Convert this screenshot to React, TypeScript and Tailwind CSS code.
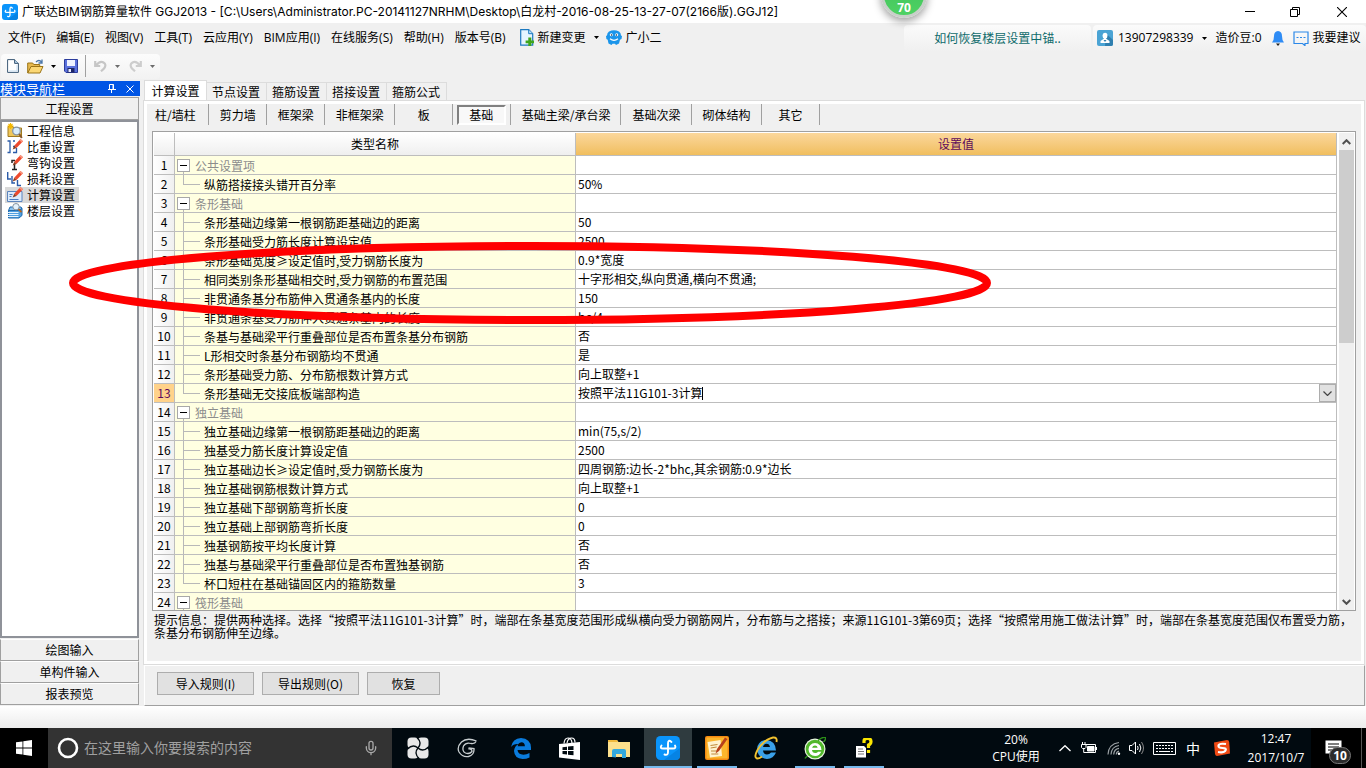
import { useState } from "react";
import type { ReactNode } from "react";
import { LuMic } from "react-icons/lu";

const UI = "font-['Open_Sans','Noto_Sans_CJK_SC',sans-serif]";
const WIDE = "font-['Inter','Noto_Sans_CJK_SC',sans-serif]";
const SONG = "font-['Noto_Sans_CJK_SC',sans-serif]";

type Row = { name: string; value?: string; group?: boolean; last?: boolean };

const rows: Row[] = [
  { name: "公共设置项", group: true },
  { name: "纵筋搭接接头错开百分率", value: "50%", last: true },
  { name: "条形基础", group: true },
  { name: "条形基础边缘第一根钢筋距基础边的距离", value: "50" },
  { name: "条形基础受力筋长度计算设定值", value: "2500" },
  { name: "条形基础宽度≥设定值时,受力钢筋长度为", value: "0.9*宽度" },
  { name: "相同类别条形基础相交时,受力钢筋的布置范围", value: "十字形相交,纵向贯通,横向不贯通;" },
  { name: "非贯通条基分布筋伸入贯通条基内的长度", value: "150" },
  { name: "非贯通条基受力筋伸入贯通条基内的长度", value: "bc/4" },
  { name: "条基与基础梁平行重叠部位是否布置条基分布钢筋", value: "否" },
  { name: "L形相交时条基分布钢筋均不贯通", value: "是" },
  { name: "条形基础受力筋、分布筋根数计算方式", value: "向上取整+1" },
  { name: "条形基础无交接底板端部构造", value: "按照平法11G101-3计算", last: true },
  { name: "独立基础", group: true },
  { name: "独立基础边缘第一根钢筋距基础边的距离", value: "min(75,s/2)" },
  { name: "独基受力筋长度计算设定值", value: "2500" },
  { name: "独立基础边长≥设定值时,受力钢筋长度为", value: "四周钢筋:边长-2*bhc,其余钢筋:0.9*边长" },
  { name: "独立基础钢筋根数计算方式", value: "向上取整+1" },
  { name: "独立基础下部钢筋弯折长度", value: "0" },
  { name: "独立基础上部钢筋弯折长度", value: "0" },
  { name: "独基钢筋按平均长度计算", value: "否" },
  { name: "独基与基础梁平行重叠部位是否布置独基钢筋", value: "否" },
  { name: "杯口短柱在基础锚固区内的箍筋数量", value: "3", last: true },
  { name: "筏形基础", group: true },
];
const EDITED_ROW = 13;

function AppLogo({ size }: { size: number }) {
  return (
    <svg width={size} height={size} viewBox="0 0 24 24" aria-hidden="true">
      <rect width="24" height="24" rx="4.5" fill="#0a94fb" />
      <path d="M8 24 24 12v8a4 4 0 0 1-4 4z" fill="#0683e4" />
      <g fill="none" stroke="#fff" strokeWidth="1.9" strokeLinecap="round">
        <path d="M15.500 6Q12 3 12 7.500V16q0 3.800-3.500 2.500" />
        <path d="M5.500 9.500Q3.500 12.500 7 12.500h10q3.500 0 2-3" />
      </g>
    </svg>
  );
}

function Caret({ color = "#000" }: { color?: string }) {
  return (
    <svg width="5" height="3" viewBox="0 0 5 3" aria-hidden="true">
      <path d="M0 0h5L2.500 3z" fill={color} />
    </svg>
  );
}

function TitleBar() {
  return (
    <header className="flex h-[23px] shrink-0 items-center bg-white pl-[2px] text-black">
      <AppLogo size={16} />
      <h1 className={`ml-1 whitespace-nowrap text-[12px] leading-[16px] ${WIDE}`}>
        广联达BIM钢筋算量软件 GGJ2013 - [C:\Users\Administrator.PC-20141127NRHM\Desktop\白龙村-2016-08-25-13-27-07(2166版).GGJ12]
      </h1>
      <div className="ml-auto flex h-full items-center">
        <button aria-label="最小化" className="flex h-full w-[46px] items-center justify-center">
          <svg width="10" height="10" viewBox="0 0 10 10"><path d="M0 4.500h10" stroke="#000" /></svg>
        </button>
        <button aria-label="还原" className="flex h-full w-[44px] items-center justify-center">
          <svg width="10" height="10" viewBox="0 0 10 10" fill="none" stroke="#000">
            <path d="M.5 2.500h7v7h-7zM2.500 2.500v-2h7v7h-2" />
          </svg>
        </button>
        <button aria-label="关闭" className="flex h-full w-[49px] items-center justify-center">
          <svg width="10" height="10" viewBox="0 0 10 10"><path d="M0 0l10 10M10 0L0 10" stroke="#000" strokeWidth="1.100" /></svg>
        </button>
      </div>
    </header>
  );
}

const menus = ["文件(F)", "编辑(E)", "视图(V)", "工具(T)", "云应用(Y)", "BIM应用(I)", "在线服务(S)", "帮助(H)", "版本号(B)"];

function MenuBar() {
  return (
    <nav aria-label="菜单" className="flex h-[29px] shrink-0 items-center whitespace-nowrap pl-2 text-[12px] leading-[16px] text-black">
      <div className="flex gap-[11px]">
        {menus.map((m) => <button key={m}>{m}</button>)}
      </div>
      <button className="ml-[14px] flex items-center gap-1">
        <svg width="14" height="17" viewBox="0 0 14 17" aria-hidden="true">
          <path d="M.7.7h8l4 4v11.500h-12z" fill="#e6f4ff" stroke="#1c79c0" strokeWidth="1.200" />
          <path d="M8.700.7v4h4" fill="#bfe0fa" stroke="#1c79c0" />
          <path d="M8.300 8.500h3v3h2.700v2.700h-2.700v2.800h-3v-2.800H5.600v-2.700h2.700z" fill="#3fa51b" />
        </svg>
        新建变更
        <span className="pl-1"><Caret /></span>
      </button>
      <button className="ml-[7px] flex items-center gap-1">
        <svg width="16" height="15" viewBox="0 0 16 15" aria-hidden="true">
          <path d="M3 1.500Q8-1.200 13 1.500q2 1.500 2 4l1 .5-.5 3-1.500.8-1 3.700-3 1.500-1-1.200H6.500L5.500 15l-3-1.500-.8-3.700L.4 9 0 6l1-.5q0-2.500 2-4z" fill="#1b95ea" />
          <circle cx="5.300" cy="4.800" r="1.500" fill="#fff" /><circle cx="10.700" cy="4.800" r="1.500" fill="#fff" />
          <circle cx="5.500" cy="5" r=".7" fill="#123" /><circle cx="10.500" cy="5" r=".7" fill="#123" />
          <path d="M4 8.800q4 3 8 0" fill="none" stroke="#fff" strokeWidth="1.200" />
        </svg>
        广小二
      </button>
      <div className="ml-auto flex h-full items-center gap-[2px] pt-px">
        <a href="#tip" className={`flex h-[26px] w-[187px] items-center justify-center rounded-sm bg-linear-to-b from-[#fbfbfb] to-[#f0f0f0] text-[#0f6b6b] ${SONG}`}>
          如何恢复楼层设置中锚..
        </a>
        <div className="flex h-[26px] w-[273px] items-center rounded-sm bg-linear-to-b from-[#fbfbfb] to-[#f0f0f0] pl-1">
          <button className="flex items-center gap-[5px]">
            <svg width="16" height="16" viewBox="0 0 16 16" aria-hidden="true">
              <rect width="16" height="16" rx="2" fill="#4aa3d4" />
              <path d="M9 3.500 16 10v4a2 2 0 0 1-2 2H8z" fill="#2f7faf" />
              <path d="M8 2.700q2.500 0 2.500 2.800T8.800 8.500L12.500 11v2h-9v-2l3.700-2.500Q5.500 8 5.500 5.500T8 2.700z" fill="#fff" />
              <path d="M6.500 10h3L8 12z" fill="#2f7faf" />
            </svg>
            13907298339
            <span className="pl-1"><Caret /></span>
          </button>
          <span className="ml-2">造价豆:0</span>
          <button aria-label="通知" className="ml-[10px]">
            <svg width="12" height="15" viewBox="0 0 12 15">
              <path d="M6 0q4 .5 4 5 0 4.500 2 6.500H0Q2 9.500 2 5 2 .5 6 0z" fill="#2f8cf5" />
              <path d="M4 12.500h4L6 15z" fill="#222" />
            </svg>
          </button>
          <button className="ml-[9px] flex items-center gap-1">
            <svg width="16" height="15" viewBox="0 0 16 15" aria-hidden="true" fill="none" stroke="#2b88e8" strokeWidth="1.200">
              <path d="M1 1h14v11.500h-3v2.200L9.500 12.500H1zM3.500 6.500h2m1.500 0h2m1.500 0h2" />
            </svg>
            我要建议
          </button>
        </div>
      </div>
    </nav>
  );
}

function ToolBar() {
  return (
    <div className="flex h-7 shrink-0 items-center pl-px">
      <div role="toolbar" aria-label="工具栏" className="flex h-[25px] w-[159px] items-center rounded-sm bg-linear-to-b from-[#fcfcfc] to-[#f2f2f2] pl-[6px]">
        <button aria-label="新建">
          <svg width="12" height="14" viewBox="0 0 12 14"><path d="M.6.6h7l3.800 3.800v9H.6z" fill="#fff" stroke="#3d5a75" /><path d="M7.600.6v3.800h3.800" fill="#b8d3ea" stroke="#3d5a75" /><path d="M2 12h8V6" stroke="#c5dcf0" fill="none" /></svg>
        </button>
        <button aria-label="打开" className="ml-2 flex items-center gap-[6px]">
          <svg width="18" height="15" viewBox="0 0 18 15">
            <path d="M.7 14V4h5l1 1.500h6V8" fill="#e7b94e" stroke="#9a7418" />
            <path d="M.8 14 4 7.500h12L13 14z" fill="#fbd774" stroke="#9a7418" />
            <path d="M9 3q3-3 5.500 0M15 .5V4h-3.500" fill="none" stroke="#4a76a8" strokeWidth="1.300" />
          </svg>
          <Caret />
        </button>
        <button aria-label="保存" className="ml-2">
          <svg width="14" height="14" viewBox="0 0 14 14"><path d="M.5.5h13v13H2L.5 12z" fill="#5a70dc" /><path d="M.5.5h13v13H2L.5 12z" fill="none" stroke="#2c3c9c" /><path d="M3 1h8v6H3z" fill="#eef1ff" /><path d="M3.500 9h7v4.500h-7z" fill="#1d2566" /><path d="M4.500 10h2.500v3H4.500z" fill="#e8ecff" /></svg>
        </button>
        <span className="ml-[7px] h-[22px] w-px bg-[#a0a0a0]" />
        <button aria-label="撤销" disabled className="ml-2 flex items-center gap-2">
          <svg width="13" height="12" viewBox="0 0 13 12" fill="none" stroke="#c6c6c6" strokeWidth="2.200"><path d="M1.200 1v5h5M2 5.500Q6 .5 9.500 2.500T10 8.500L7 11.300" /></svg>
          <Caret color="#6b6b6b" />
        </button>
        <button aria-label="重做" disabled className="ml-[9px] flex items-center gap-[8px]">
          <svg width="13" height="12" viewBox="0 0 13 12" fill="none" stroke="#cdcdcd" strokeWidth="2.200"><path d="M11.800 1v5h-5M11 5.500Q7 .5 3.500 2.500T3 8.500L6 11.300" /></svg>
          <Caret color="#6b6b6b" />
        </button>
      </div>
    </div>
  );
}

function Pencil() {
  return (
    <g>
      <path d="M13.500 0 16 2.300 9.500 9 7.200 6.700z" fill="#ee4a2e" />
      <path d="M13.500 0 16 2.300l-1.200 1.200-2.500-2.300z" fill="#f8977f" />
      <path d="M7.200 6.700 9.500 9 5.700 10.500z" fill="#8a3a1c" />
    </g>
  );
}

const navItems: { label: string; icon: ReactNode }[] = [
  {
    label: "工程信息",
    icon: <><path d="M1 3.500h5l1 1.500h7.500v8.500H1z" fill="#f0c75a" stroke="#a07a20" /><path d="M3.500 0v6M.5 3h6M1.500 1l4 4M5.500 1l-4 4" stroke="#f5b800" strokeWidth="1.100" /><circle cx="9.500" cy="8" r="3.800" fill="#d8ecfa" stroke="#8894a0" strokeWidth="1.300" /><path d="m12.300 11 2.500 4" stroke="#8a5a2a" strokeWidth="2" /></>,
  },
  {
    label: "比重设置",
    icon: <><path d="M.5 2H3v11.500H.5M6 2h2M6 7.500h2M6 13.500h3.500V9M3 13.500" fill="none" stroke="#2b5ba8" strokeWidth="1.300" /><Pencil /></>,
  },
  {
    label: "弯钩设置",
    icon: <><path d="M7.500 9v5.500M5 14.500h5M5 8V5.500h3" fill="none" stroke="#222" strokeWidth="1.500" /><Pencil /></>,
  },
  {
    label: "损耗设置",
    icon: <><path d="M.7 1v7H4M5 5v7h3M10.500 9v5.500H14" fill="none" stroke="#2b5ba8" strokeWidth="1.400" /><Pencil /></>,
  },
  {
    label: "计算设置",
    icon: <><path d="M.5 4.500h14.500v10H.5z" fill="#dcebfb" stroke="#5b84bd" /><path d="M2.500 7.500h3M2.500 9.500h2M2.500 12.500h9" stroke="#4d7cc0" /><Pencil /></>,
  },
  {
    label: "楼层设置",
    icon: <><path d="M3 4h11l1 1.500-3 2H1.500z" fill="#8cc3f0" stroke="#1f6bb0" /><path d="M1.500 7.500h10l3.500-2v7l-3 2.500H1.500z" fill="#4f9fe0" stroke="#1f6bb0" /><path d="M1 9.500h10.500M1 11.500h10.500M1 13.500h10.500" stroke="#e6f3fd" /><circle cx="9" cy="3.700" r="3.200" fill="#e4f2fc" stroke="#8894a0" /><path d="m11.500 6.200 3 3" stroke="#b5651d" strokeWidth="1.800" /></>,
  },
];

function NavPanel() {
  const bar = "h-[22px] border border-[#a0a0a0] border-t-white bg-[#f0f0f0] text-center";
  return (
    <aside className={`flex w-[140px] shrink-0 flex-col pt-px text-[12px] leading-[16px] text-black ${SONG}`}>
      <div className="flex h-[15px] items-center bg-[#0055e5] text-[13px] leading-[13px] text-white">
        <h2>模块导航栏</h2>
        <button aria-label="固定" className="ml-auto">
          <svg width="8" height="9" viewBox="0 0 8 9" fill="none" stroke="#fff"><path d="M1.500 5V.5h4V5M0 5.500h8M5 .5V5M3.500 5.500V9" /></svg>
        </button>
        <button aria-label="关闭导航栏" className="ml-[10px] mr-[6px]">
          <svg width="8" height="8" viewBox="0 0 8 8" stroke="#fff"><path d="m.5.5 7 7M7.500.5l-7 7" /></svg>
        </button>
      </div>
      <div className="mr-px mt-px flex min-h-0 flex-1 flex-col">
        <button className="h-[23px] border border-[#a0a0a0] bg-[#f0f0f0] text-center">工程设置</button>
        <ul className="flex-1 border-2 border-[#8f9299] bg-white pl-[3px] pt-px">
          {navItems.map((it) => (
            <li key={it.label} className="flex">
              <button className={it.label === "计算设置" ? "flex h-4 items-center gap-1 bg-[#d9d9d9] pl-[2px] pr-1" : "flex h-4 items-center gap-1 pl-[2px] pr-1"}>
                <svg width="16" height="16" viewBox="0 0 16 16" aria-hidden="true">{it.icon}</svg>
                {it.label}
              </button>
            </li>
          ))}
        </ul>
        <button className={`mt-px ${bar}`}>绘图输入</button>
        <button className={bar}>单构件输入</button>
        <button className={bar}>报表预览</button>
      </div>
      <div className="h-px" />
    </aside>
  );
}

function TreeName({ row }: { row: Row }) {
  if (row.group) {
    return (
      <div className="flex h-[18px] pl-[2px]">
        <div className="flex flex-col items-center pt-[3px]">
          <button aria-label="折叠" className="flex h-[13px] w-[13px] shrink-0 items-center justify-center border border-[#a8a8a8] bg-white">
            <span className="h-px w-[7px] bg-black" />
          </button>
          <span className="h-[2px] w-px bg-[#b8b8b8]" />
        </div>
        <span className="pl-[5px] pt-[2px] text-[#8c8c8c]">{row.name}</span>
      </div>
    );
  }
  return (
    <div className="flex h-[18px] pl-2">
      <div className="flex w-[17px] flex-col">
        <span className="h-[10px] border-b border-l border-[#b8b8b8]" />
        {!row.last && <span className="h-2 border-l border-[#b8b8b8]" />}
      </div>
      <span className="pl-1 pt-[2px]">{row.name}</span>
    </div>
  );
}

function ValueCell({ row, index }: { row: Row; index: number }) {
  const [text, setText] = useState(row.value ?? "");
  if (index !== EDITED_ROW) return <div className="h-[18px] pl-[2px] leading-[18px]">{row.value}</div>;
  return (
    <div className="flex h-[18px] items-center pl-[2px]">
      <input aria-label={row.name} value={text} onChange={(e) => setText(e.target.value)} className="field-sizing-content h-4 bg-transparent p-0 leading-[16px] outline-none" />
      <span className="h-[13px] w-px bg-black" />
      <button aria-label="展开选项" className="ml-auto flex h-[18px] w-[17px] items-center justify-center border border-[#adadad] bg-[#e1e1e1]">
        <svg width="9" height="5" viewBox="0 0 9 5" fill="none" stroke="#444" strokeWidth="1.200"><path d="m.5.5 4 4 4-4" /></svg>
      </button>
    </div>
  );
}

function SettingsGrid() {
  const line = "border-b border-r border-[#bdbdbd] p-0";
  return (
    <div className="ml-[5px] mr-[5px] flex min-h-0 flex-1 overflow-hidden border border-[#a0a0a0] bg-white pl-px pt-px">
      <div className="min-w-0 flex-1 overflow-hidden">
        <table className="w-full table-fixed border-separate border-spacing-0 whitespace-nowrap text-left">
          <colgroup>
            <col className="w-[21px]" />
            <col className="w-[401px]" />
            <col />
          </colgroup>
          <thead>
            <tr className="h-[23px]">
              <th className={`bg-linear-to-b from-white to-[#efefef] ${line}`} />
              <th className={`bg-linear-to-b from-white to-[#efefef] text-center font-normal ${line}`}>类型名称</th>
              <th className={`bg-linear-to-b from-[#fbd79b] to-[#f0be5d] text-center font-normal text-[#5c0a5c] ${line}`}>设置值</th>
            </tr>
          </thead>
          <tbody>
            {rows.map((row, i) => {
              const n = i + 1;
              return (
                <tr key={n} className="h-[19px]">
                  <th scope="row" className={n === EDITED_ROW ? `bg-[#ffd28a] text-center font-normal leading-[18px] text-[#5c0a5c] ${line}` : `bg-linear-to-r from-white to-[#f0f0f0] text-center font-normal leading-[18px] ${line}`}>
                    <div className="h-[18px]">{n}</div>
                  </th>
                  <td className={`bg-[#ffffe1] ${line}`}><TreeName row={row} /></td>
                  <td className={`bg-white ${line}`}><ValueCell row={row} index={n} /></td>
                </tr>
              );
            })}
          </tbody>
        </table>
      </div>
      <div className="ml-[2px] mr-px flex w-[15px] flex-col bg-[#f0f0f0]">
        <button aria-label="向上滚动" className="flex h-[17px] items-center justify-center">
          <svg width="9" height="6" viewBox="0 0 9 6" fill="none" stroke="#505050" strokeWidth="2"><path d="m.7 5 3.800-3.800L8.300 5" /></svg>
        </button>
        <div className="min-h-0 flex-1"><div className="h-[43.5%] bg-[#cdcdcd]" /></div>
        <button aria-label="向下滚动" className="flex h-[17px] items-center justify-center">
          <svg width="9" height="6" viewBox="0 0 9 6" fill="none" stroke="#505050" strokeWidth="2"><path d="m.7 1 3.800 3.800L8.300 1" /></svg>
        </button>
      </div>
    </div>
  );
}

const pageTabs = ["计算设置", "节点设置", "箍筋设置", "搭接设置", "箍筋公式"];
const partTabs = ["柱/墙柱", "剪力墙", "框架梁", "非框架梁", "板", "基础", "基础主梁/承台梁", "基础次梁", "砌体结构", "其它"];

function Workspace() {
  const action = "h-[23px] border border-[#adadad] bg-[#e1e1e1] text-center";
  return (
    <main className={`ml-1 mr-px flex min-w-0 flex-1 flex-col text-[12px] leading-[16px] text-black ${SONG}`}>
      <div role="tablist" aria-label="设置页" className="flex h-[21px] items-end">
        {pageTabs.map((t, i) => (
          <button
            key={t}
            role="tab"
            aria-selected={i === 0}
            className={i === 0 ? "h-[21px] w-[63px] border border-b-0 border-[#dcdcdc] bg-white" : "h-[19px] w-[60px] border border-l-0 border-[#dcdcdc] pr-px"}
          >
            {t}
          </button>
        ))}
      </div>
      <section className="mr-px flex min-h-0 flex-1 flex-col border-3 border-t-0 border-white outline-1 -outline-offset-0 outline-[#dcdcdc]">
        <div className="h-[3px] bg-white" />
        <div role="tablist" aria-label="构件" className="flex h-[21px] shrink-0 whitespace-nowrap bg-[#f0f0f0]">
          {partTabs.map((t) => (
            <button key={t} role="tab" aria-selected={t === "基础"} className={t === "基础" ? "w-[58px] border-r border-[#a0a0a0] px-1" : "min-w-[58px] border-r border-[#a0a0a0] pl-[11px] pr-[10px] first:pl-2 first:pr-3"}>
              {t === "基础" ? (
                <span className="flex h-5 items-center justify-center border-2 border-b-white border-l-[#808080] border-r-white border-t-[#808080] bg-[#f8f8f8]">{t}</span>
              ) : t}
            </button>
          ))}
        </div>
        <div className="flex min-h-0 flex-1 flex-col bg-[#f0f0f0] pt-[6px]">
          <SettingsGrid />
          <p className="h-[50px] shrink-0 overflow-hidden whitespace-nowrap pl-[7px] pt-[2px] leading-[13px]">
            提示信息：提供两种选择。选择“按照平法11G101-3计算”时，端部在条基宽度范围形成纵横向受力钢筋网片，分布筋与之搭接；来源11G101-3第69页；选择“按照常用施工做法计算”时，端部在条基宽度范围仅布置受力筋，
            <br />
            条基分布钢筋伸至边缘。
          </p>
        </div>
      </section>
      <div className="mt-[1px] flex h-[41px] shrink-0 gap-2 border border-[#a0a0a0] border-l-white border-t-white pl-3 pt-[6px]">
        <button className={`w-[97px] ${action}`}>导入规则(I)</button>
        <button className={`w-[97px] ${action}`}>导出规则(O)</button>
        <button className={`w-[73px] ${action}`}>恢复</button>
      </div>
    </main>
  );
}

function TaskButton({ label, state = "idle", children }: { label: string; state?: "idle" | "open" | "active"; children: ReactNode }) {
  return (
    <button aria-label={label} className={state === "active" ? "flex h-10 w-12 flex-col items-center bg-[#2f3b3f]" : "flex h-10 w-12 flex-col items-center"}>
      <span className="flex h-[38px] items-center pt-[2px]">{children}</span>
      {state === "active" && <span className="h-[2px] w-12 bg-[#76b9ed]" />}
      {state === "open" && <span className="h-[2px] w-10 bg-[#76b9ed]" />}
    </button>
  );
}

function TaskBar() {
  return (
    <footer className="flex h-10 shrink-0 items-stretch bg-[#010a10] text-[12px] leading-[17px] text-white">
      <button aria-label="开始" className="flex w-12 shrink-0 items-center justify-center bg-black">
        <svg width="16" height="16" viewBox="0 0 16 16" fill="#fff"><path d="M0 2.300 6.500 1.400v6.200H0zM7.300 1.300 16 0v7.600H7.300zM0 8.400h6.500v6.200L0 13.700zM7.300 8.400H16V16l-8.700-1.300z" /></svg>
      </button>
      <label className="flex w-[344px] shrink-0 items-center bg-[#333333] pl-[9px] pr-[13px]">
        <svg width="22" height="22" viewBox="0 0 22 22" fill="none" stroke="#fff" aria-hidden="true"><circle cx="11" cy="11" r="9" strokeWidth="2.600" /></svg>
        <input aria-label="搜索" placeholder="在这里输入你要搜索的内容" className="ml-[5px] min-w-0 flex-1 bg-transparent text-[14px] leading-[20px] outline-none placeholder:text-[#a0a0a0]" />
        <LuMic size={16} color="#a8a8a8" />
      </label>
      <div className="flex gap-px pl-[2px]">
        <TaskButton label="四叶草">
          <svg width="22" height="22" viewBox="0 0 22 22">
            <g fill="#e8e8e8">
              <rect x=".5" y=".5" width="11" height="11" rx="4" /><rect x="10.500" y=".5" width="11" height="11" rx="4" />
              <rect x=".5" y="10.500" width="11" height="11" rx="4" /><rect x="10.500" y="10.500" width="11" height="11" rx="4" />
              <rect x="7" y="7" width="8" height="8" />
            </g>
            <path d="M11 11Q15.500 6 10 .5M11 11q5 4.500 10.500-1M11 11q-4.500 5 1 10.500M11 11Q6 6.500.5 12" fill="none" stroke="#010a10" strokeWidth="1.300" />
          </svg>
        </TaskButton>
        <TaskButton label="旋涡">
          <svg width="20" height="20" viewBox="0 0 20 20" fill="none" stroke="#c8ced0" strokeWidth="1.300">
            <path d="M19.500 3Q10-1 4.500 4-.5 9 2 14q3.500 5.500 9.500 4.500 6-1.500 5.500-8l-5.500-.5" />
            <path d="M19 3.500Q18 6 14 5.500 9 4 6.500 8q-2 5 2 7 4 1.500 6.500-1.500 0-3-3.500-2.500" />
          </svg>
        </TaskButton>
        <span className="w-1" />
        <TaskButton label="Edge">
          <svg width="20" height="21" viewBox="0 0 20 21"><path d="M0 9Q1.500.5 10 0q9.500.5 10 9.500V12H6.500q.5 4.500 6 4.700 3 0 6-1.700v4.500q-3 1.500-7 1.500-8-.5-8.500-8 .5-5 4.500-7Q2.500 5.500 0 9zm6.700-.8h7.200Q13.700 4.500 10.500 4.300 7 4.800 6.700 8.200z" fill="#0a7bdc" /></svg>
        </TaskButton>
        <TaskButton label="应用商店">
          <svg width="22" height="23" viewBox="0 0 22 23"><path d="M0 7l21-2v18L0 20.500z" fill="#fff" /><path d="M5 6.500Q5.500 1 9 1t4 5M8 6q1-5 4.500-5T16 5.500" fill="none" stroke="#fff" strokeWidth="1.200" /><path d="M3.500 10.200l4.500-.5V13H3.500zM9 9.500l5.500-.6V13H9zM3.500 14H8v3.500l-4.500-.5zM9 14h5.500v4.300L9 17.700z" fill="#010a10" /></svg>
        </TaskButton>
        <TaskButton label="文件资源管理器">
          <svg width="22" height="19" viewBox="0 0 22 19"><path d="M0 1h9l1.500 2H22v15H0z" fill="#fce08c" /><path d="M0 1h9l1 2H0z" fill="#f0b93c" /><path d="M4 18V12q0-2 2-2h10q2 0 2 2v7h-4v-4H8v3.500z" fill="#33a8dc" /></svg>
        </TaskButton>
        <TaskButton label="广联达" state="active"><AppLogo size={24} /></TaskButton>
        <TaskButton label="绘图" state="open">
          <svg width="24" height="24" viewBox="0 0 24 24"><rect width="24" height="24" rx="2" fill="#f48a12" /><rect x="1.500" y="1.500" width="21" height="21" fill="#fbb62c" /><path d="M2.500 6l13-2 1.500 16-12 1.500z" fill="#fff3d0" /><path d="M5.500 9.500l7-1M5.700 12l6-1M6 15h6M6.300 18h7" stroke="#c08a3a" /><path d="M20 1.500 22.500 3 14 15l-3.500 2.500L12 13z" fill="#b8401a" /></svg>
        </TaskButton>
        <TaskButton label="Internet Explorer">
          <svg width="24" height="24" viewBox="0 0 24 24"><path d="M3 13Q4 4.500 12.500 4q9 .7 9.500 10.500H9q.5 4 4 4 2.500 0 4-2h5q-2.500 6-9 6.500Q3.500 22 3 13zm6-2h7q-.5-3.200-3.500-3.300Q9.500 8 9 11z" fill="#3aa0e8" /><path d="M22.500 6Q23.500 1 19 1.500 10 3.500 3.500 14q-4 7.500-.5 8.500 2 .2 5-2" fill="none" stroke="#f2c230" strokeWidth="1.900" /></svg>
        </TaskButton>
        <TaskButton label="360浏览器" state="open">
          <svg width="22" height="23" viewBox="0 0 22 23"><circle cx="11" cy="12" r="10.500" fill="#e9f5df" /><circle cx="11" cy="12" r="9.300" fill="#52b82c" /><path d="M4.500 12.500Q5 6.500 11 6q6 .3 6.500 7H8q.3 3 3.300 3 2 0 2.700-1.200h3.200Q15.500 19 11.200 19 5 18.500 4.500 12.500zm3.600-1.700h5.600Q13.300 8.500 11 8.500t-2.900 2.300z" fill="#fff" /><path d="M2 20.500Q0 22 3.500 19M14 3.500Q18.500-.5 21.500.5q.5 2-2 4.500" fill="none" stroke="#2c8f18" strokeWidth="1.400" /></svg>
        </TaskButton>
        <TaskButton label="帮助" state="open">
          <svg width="18" height="20" viewBox="0 0 18 20"><path d="M1 8h8l2 2v9.500H1z" fill="#fff" /><path d="M3 11h5M3 13.500h6M3 16h6" stroke="#777" /><path d="M9 5V3q0-2.500 3.500-2.500T16 3.500Q16 6 13.500 7v3M13.500 12v3" fill="none" stroke="#fbe600" strokeWidth="3.200" /></svg>
        </TaskButton>
      </div>
      <div className="ml-auto flex items-center">
        <div className="w-[60px] text-center">20%<br />CPU使用</div>
        <button aria-label="显示隐藏的图标" className="ml-[13px]"><svg width="12" height="7" viewBox="0 0 12 7" fill="none" stroke="#fff" strokeWidth="1.300"><path d="m.5 6 5.500-5.300L11.500 6" /></svg></button>
        <svg className="ml-[10px]" width="16" height="12" viewBox="0 0 16 12" fill="none" stroke="#fff" aria-label="电源"><path d="M5 2.500h9.500v8H5M15.500 5v3M1.500 0v2.500M4 0v2.500M.5 2.500h4.500v3L4 6.500H1.500l-1-1zM2.700 6.500v4H5" /><path d="M6.500 4.500h6.500v4.500H6.500z" fill="#fff" /></svg>
        <svg className="ml-[10px]" width="14" height="14" viewBox="0 0 14 14" fill="none" stroke="#9aa0a4" strokeWidth="1.200" aria-label="网络"><path d="M1 13.500Q1.500 3 12 1.500M4 13.500Q4.500 5.500 12 4.500M6.700 13.500q.3-5.500 5.300-6.200M9.300 13.500q.2-3 2.700-3.300" /><circle cx="12" cy="12.700" r="1.200" fill="#fff" stroke="none" /></svg>
        <svg className="ml-2" width="16" height="14" viewBox="0 0 16 14" fill="none" stroke="#fff" aria-label="音量"><path d="M.5 4.500h2.500l3.500-3.500v12L3 9.500H.5zM8.500 5q1.300 2 0 4M10.500 3q2.700 4 0 8" /><path d="M12.500 1q4 6 0 12" stroke="#888" /></svg>
        <svg className="ml-2" width="23" height="13" viewBox="0 0 23 13" fill="none" stroke="#fff" aria-label="触摸键盘"><path d="M.5.500h22v12H.5z" /><path d="M3 3.500h17M3 6.500h17" strokeDasharray="2 1" /><path d="M3 9.500h2m1 0h11m1 0h2" /></svg>
        <span className="ml-[10px] text-[14px]">中</span>
        <svg className="ml-[14px]" width="16" height="16" viewBox="0 0 16 16" aria-label="搜狗输入法"><path d="M0 2.500 13 0q2 0 2.200 2L16 13.500 3 16q-1.500 0-2-2z" fill="#f04a14" /><path d="M12 4Q5 3 4.500 5.500T8.500 8t3 2.500T4 12" fill="none" stroke="#fff" strokeWidth="2.200" /></svg>
        <time className="ml-[11px] w-[70px] text-center leading-[19px]">12:47<br />2017/10/7</time>
        <button aria-label="操作中心" className="relative flex h-10 w-[51px] items-center border-r border-[#555] bg-black pl-[14px]">
          <svg width="17" height="17" viewBox="0 0 17 17"><path d="M.5.500h16v13H9l-4 3v-3H.5z" fill="#fff" /><path d="M3 4h11M3 7h11M3 10h6" stroke="#000" strokeWidth="1.200" /></svg>
          <span className="absolute left-[18px] top-[19px] flex h-[17px] w-[22px] items-center justify-center rounded-full border border-[#777] bg-[#2b2b2b] text-[12px] font-bold leading-[15px]">10</span>
        </button>
        <span className="h-full w-1 bg-black" />
      </div>
    </footer>
  );
}

export default function App() {
  return (
    <div lang="zh-CN" className={`relative flex h-screen flex-col overflow-hidden bg-[#f0f0f0] ${UI}`}>
      <TitleBar />
      <MenuBar />
      <ToolBar />
      <div className="flex min-h-0 flex-1">
        <NavPanel />
        <Workspace />
      </div>
      <div className="h-[22px] shrink-0 bg-linear-to-b from-white to-[#ececec]" />
      <TaskBar />

      <div className="absolute left-[881px] top-[-28px] flex h-[46px] w-[46px] items-end justify-center rounded-full border-3 border-[#c9cfca] bg-linear-to-b from-[#3fbf5a] to-[#4ed263] text-[12px] font-bold leading-[14px] text-white shadow-[0_3px_8px_rgba(0,0,0,0.4)]">
        70
      </div>
      <svg className="pointer-events-none absolute left-[65px] top-[238px]" width="930" height="90" viewBox="0 0 930 90" fill="none" aria-hidden="true">
        <ellipse cx="465" cy="45" rx="457" ry="37" stroke="#f00" strokeWidth="8" />
      </svg>
    </div>
  );
}
